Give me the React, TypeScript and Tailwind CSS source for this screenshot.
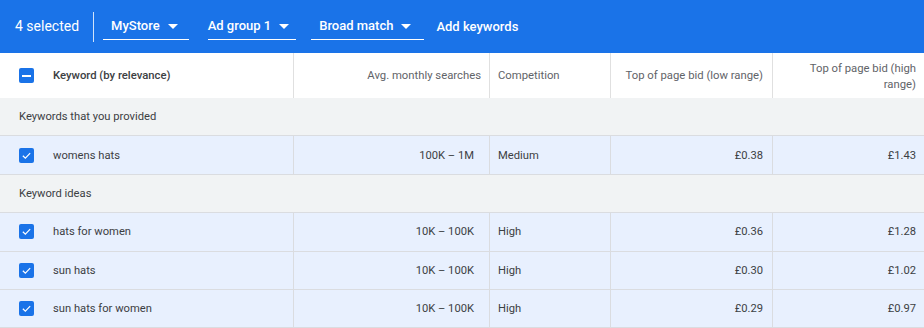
type Row = {
  keyword: string;
  searches: string;
  competition: string;
  low: string;
  high: string;
};

const provided: Row[] = [
  { keyword: "womens hats", searches: "100K – 1M", competition: "Medium", low: "£0.38", high: "£1.43" },
];

const ideas: Row[] = [
  { keyword: "hats for women", searches: "10K – 100K", competition: "High", low: "£0.36", high: "£1.28" },
  { keyword: "sun hats", searches: "10K – 100K", competition: "High", low: "£0.30", high: "£1.02" },
  { keyword: "sun hats for women", searches: "10K – 100K", competition: "High", low: "£0.29", high: "£0.97" },
];

const cols = "grid grid-cols-[293px_196px_121px_162px_1fr]";

function Caret() {
  return (
    <svg width="10" height="5" viewBox="0 0 10 5" className="shrink-0">
      <path d="M0 0 L10 0 L5 5 Z" fill="white" />
    </svg>
  );
}

function Dropdown({ label, className }: { label: string; className: string }) {
  return (
    <button className={`flex items-center gap-2 h-[26px] border-b-[1.5px] border-white text-[13px] font-medium text-white ${className}`}>
      <span>{label}</span>
      <Caret />
    </button>
  );
}

function Checkbox({ indeterminate = false }: { indeterminate?: boolean }) {
  return (
    <div className="w-[15px] h-[15px] rounded-[2px] bg-[#1a73e8] flex items-center justify-center shrink-0">
      {indeterminate ? (
        <div className="w-[9px] h-[2px] bg-white" />
      ) : (
        <svg width="11" height="11" viewBox="0 0 24 24">
          <path d="M4 12.5 L9.5 18 L20 7" fill="none" stroke="white" strokeWidth="2.6" />
        </svg>
      )}
    </div>
  );
}

function SectionRow({ label }: { label: string }) {
  return (
    <div className="h-[38.4px] flex items-center pl-[19px] pt-[2px] bg-[#f1f3f4] border-b border-[#dadce0] text-[11.2px] text-[#3c4043]">
      {label}
    </div>
  );
}

function DataRow({ row }: { row: Row }) {
  return (
    <div className={`${cols} h-[38.4px] bg-[#e8f0fe] border-b border-[#dadce0] text-[11.2px] text-[#3c4043]`}>
      <div className="flex items-center pl-[19px] gap-[19px]">
        <Checkbox />
        <span className="pt-[2px]">{row.keyword}</span>
      </div>
      <div className="flex items-center justify-end pr-[15px] pt-[2px] border-l border-[#dadce0]">{row.searches}</div>
      <div className="flex items-center pl-2 pt-[2px] border-l border-[#dadce0]">{row.competition}</div>
      <div className="flex items-center justify-end pr-[9px] pt-[2px] border-l border-[#dadce0]">{row.low}</div>
      <div className="flex items-center justify-end pr-2 pt-[2px] border-l border-[#dadce0]">{row.high}</div>
    </div>
  );
}

export default function App() {
  return (
    <div className="w-[924px] h-[328px] overflow-hidden bg-white font-['Roboto','Liberation_Sans',sans-serif]">
      {/* Selection bar */}
      <div className="h-[53px] bg-[#1a73e8] flex items-center pl-[15px] text-white">
        <span className="text-[14px]">4 selected</span>
        <div className="w-px h-[30px] bg-white/80 ml-[14px] mr-[9px]" />
        <Dropdown label="MyStore" className="pl-2 pr-[11px]" />
        <Dropdown label="Ad group 1" className="ml-[19px] pr-[7px]" />
        <Dropdown label="Broad match" className="ml-[15px] pl-2 pr-[13px]" />
        <span className="ml-[12px] text-[13px] font-medium">Add keywords</span>
      </div>

      {/* Column headers */}
      <div className={`${cols} h-[45px] bg-white text-[11.3px] text-[#5f6368]`}>
        <div className="flex items-center pl-[19px] gap-[19px]">
          <Checkbox indeterminate />
          <span className="pt-[2px] font-medium text-[#3c4043]">Keyword (by relevance)</span>
        </div>
        <div className="flex items-center justify-end pr-2 pt-[2px] border-l border-[#e0e0e0]">Avg. monthly searches</div>
        <div className="flex items-center pl-2 pt-[2px] border-l border-[#e0e0e0]">Competition</div>
        <div className="flex items-center justify-end pr-[9px] pt-[2px] border-l border-[#e0e0e0]">Top of page bid (low range)</div>
        <div className="flex items-center justify-end pr-2 pt-[3px] border-l border-[#e0e0e0] text-right leading-[16px]">
          <span>
            Top of page bid (high
            <br />
            range)
          </span>
        </div>
      </div>

      <SectionRow label="Keywords that you provided" />
      {provided.map((r) => (
        <DataRow key={r.keyword} row={r} />
      ))}
      <SectionRow label="Keyword ideas" />
      {ideas.map((r) => (
        <DataRow key={r.keyword} row={r} />
      ))}
    </div>
  );
}
